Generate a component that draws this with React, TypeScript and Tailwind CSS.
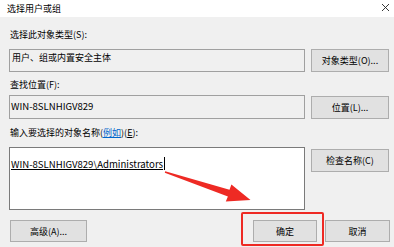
import React from "react";

function Btn({ children, className = "" }: { children: React.ReactNode; className?: string }) {
  return (
    <div
      className={`flex h-[22px] items-center justify-center border border-[#adadad] bg-[#e1e1e1] text-[9px] leading-none text-black ${className}`}
    >
      {children}
    </div>
  );
}

export default function App() {
  return (
    <div className="relative h-[247px] w-[394px] overflow-hidden bg-[#f0f0f0] font-['Noto_Sans_CJK_SC',sans-serif] text-black">
      {/* title bar */}
      <div className="flex h-[17px] items-center justify-between bg-white pl-[7px] pr-[4px]">
        <span className="text-[9px] leading-none">选择用户或组</span>
        <svg width="9" height="9" viewBox="0 0 9 9" className="mb-[3px]">
          <path d="M1 1L8 8M8 1L1 8" stroke="#222" strokeWidth="0.9" />
        </svg>
      </div>

      <div className="flex flex-col pl-[9px] pr-[5px]">
        <div className="mt-[12px] h-[12px] pl-[1px] text-[9px] leading-[12px]">选择此对象类型(S):</div>
        <div className="mt-[8px] flex gap-[6px]">
          <div className="h-[23px] flex-1 border border-[#a0a0a0] bg-[#f0f0f0] pl-[2px] pt-[2px] text-[9px] leading-[12px]">
            用户、组或内置安全主体
          </div>
          <Btn className="h-[23px] w-[78px]">对象类型(O)...</Btn>
        </div>

        <div className="mt-[7px] h-[12px] pl-[1px] text-[9px] leading-[12px]">查找位置(F):</div>
        <div className="mt-[4px] flex gap-[6px]">
          <div className="h-[24px] flex-1 border border-[#a0a0a0] bg-[#f0f0f0] pl-[1px] pt-[4px] text-[9.6px] leading-[12px]">
            WIN-8SLNHIGV829
          </div>
          <Btn className="mt-[1px] h-[23px] w-[78px]">位置(L)...</Btn>
        </div>

        <div className="mt-[8px] h-[12px] pl-[1px] text-[9px] leading-[12px]">
          输入要选择的对象名称(
          <span className="text-[#0066cc] underline">例如</span>)(<span className="underline">E</span>):
        </div>
        <div className="mt-[8px] flex gap-[6px]">
          <div className="h-[63px] flex-1 border border-[#7a7a7a] bg-white pl-[1px] pt-[7px] text-[9.6px] leading-[12px]">
            <span className="underline">WIN-8SLNHIGV829\Administrators</span>
            <span className="ml-[1px] inline-block h-[13px] w-[1px] translate-y-[2px] bg-black" />
          </div>
          <Btn className="mt-[2px] h-[23px] w-[78px]">检查名称(C)</Btn>
        </div>

        <div className="mt-[10px] flex items-start">
          <Btn className="ml-[1px] w-[77px]">高级(A)...</Btn>
          <div className="flex-1" />
          <Btn className="w-[64px]">确定</Btn>
          <Btn className="ml-[8px] mr-[-1px] w-[65px]">取消</Btn>
        </div>
      </div>

      {/* annotation overlay */}
      <div className="absolute left-[241px] top-[212px] h-[34px] w-[83px] rounded-[2px] border-2 border-[#ee2a24]" />
      <svg className="absolute left-0 top-0" width="394" height="247" viewBox="0 0 394 247">
        <polygon
          points="165.2,171.2 229.5,189.8 231.4,184.6 250.5,200 225.8,201.4 227.9,196.4 164.8,172.8"
          fill="#ee2a24"
        />
      </svg>
    </div>
  );
}
